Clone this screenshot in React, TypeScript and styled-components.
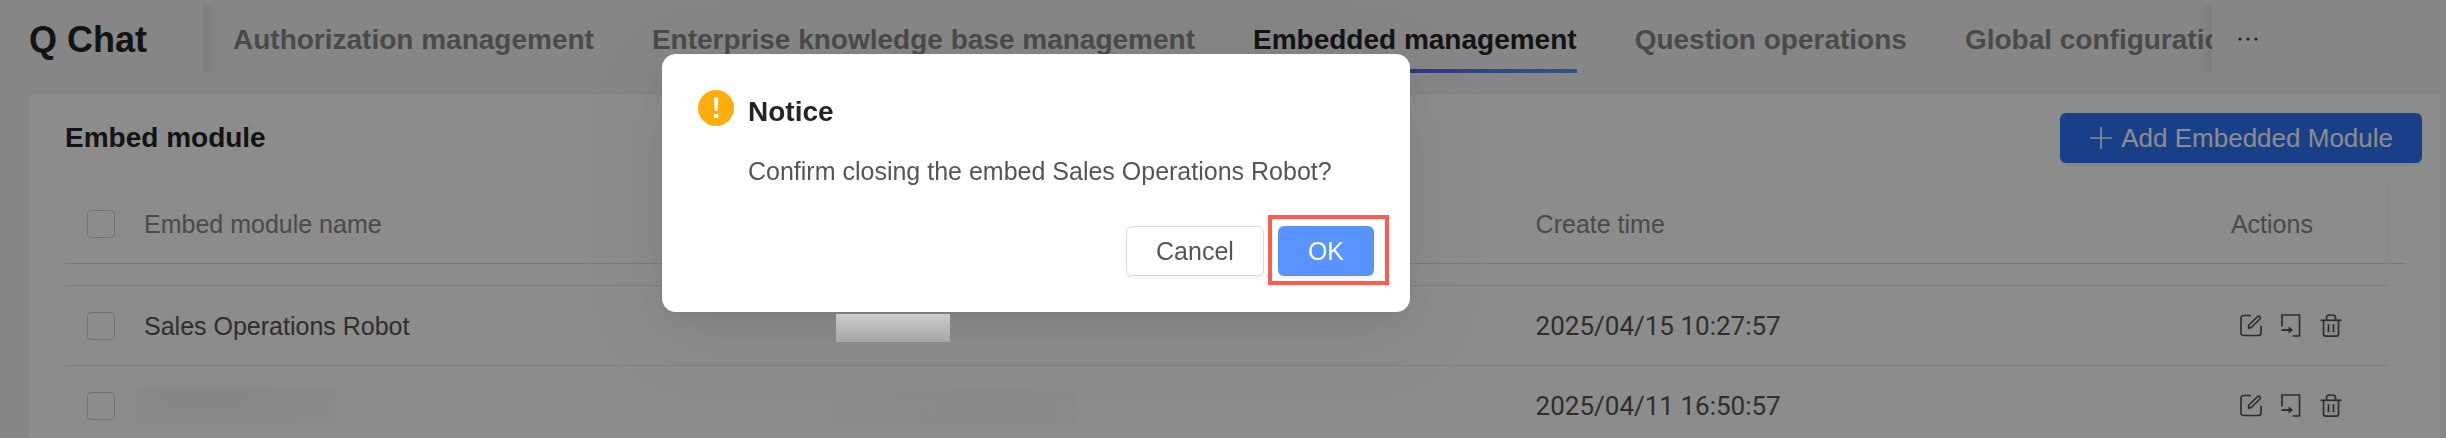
import React from "react";
import styled, { createGlobalStyle, css } from "styled-components";

const GlobalStyle = createGlobalStyle`
  *, *::before, *::after { box-sizing: border-box; }
  body {
    margin: 0;
    background: #f4f4f4;
    color: #555;
    font-family: "Liberation Sans", Arial, Helvetica, sans-serif;
    font-size: 25px;
    line-height: 40px;
  }
  h1, h2, p { margin: 0; }
  button { font: inherit; cursor: pointer; }
`;

const Page = styled.div`
  display: flex;
  flex-direction: column;
  height: 100vh;
  overflow: hidden;
`;

const Header = styled.header`
  display: flex;
  align-items: center;
  flex: none;
  padding: 5px 234px 22px 29px;
`;

const Brand = styled.h1`
  flex: none;
  width: 174px;
  height: 68px;
  color: #242424;
  font-size: 36px;
  font-weight: 700;
  line-height: 70px;
`;

const TabScroller = styled.nav`
  position: relative;
  display: flex;
  flex: 1;
  gap: 58px;
  min-width: 0;
  padding-left: 30px;
  overflow: hidden;

  &::before,
  &::after {
    content: "";
    position: absolute;
    top: 0;
    bottom: 0;
    width: 14px;
  }
  &::before {
    left: 0;
    background: linear-gradient(90deg, rgba(0, 0, 0, 0.06), rgba(0, 0, 0, 0));
  }
  &::after {
    right: 0;
    background: linear-gradient(270deg, rgba(0, 0, 0, 0.06), rgba(0, 0, 0, 0));
  }
`;

const Tab = styled.a<{ $active?: boolean }>`
  flex: none;
  height: 68px;
  color: ${(p) => (p.$active ? "#242424" : "#888")};
  font-size: 28px;
  font-weight: 700;
  line-height: 70px;
  text-decoration: none;
  white-space: nowrap;
  border-bottom: 4px solid transparent;
  border-image: ${(p) =>
    p.$active ? "linear-gradient(90deg, #5f5fff, #5560e8 45%, #57a0f0) 1" : "none"};
`;

const MoreButton = styled.button`
  display: flex;
  flex: none;
  margin-left: 24px;
  margin-right: -48px;
  padding: 0;
  border: 0;
  background: none;
  color: #444;
`;

const Card = styled.main`
  flex: none;
  margin: 0 6px 0 29px;
  padding: 18px 18px 0 36px;
  background: #fff;
`;

const CardHead = styled.div`
  display: flex;
  align-items: center;
  justify-content: space-between;
  margin-bottom: 22px;
`;

const CardTitle = styled.h2`
  color: #242424;
  font-size: 28px;
  font-weight: 700;
`;

const Button = styled.button<{ $kind: "primary" | "light" | "plain" }>`
  display: flex;
  align-items: center;
  gap: 8px;
  height: 50px;
  padding: 0 ${(p) => (p.$kind === "primary" ? 28 : 29)}px;
  border: 1px solid ${(p) => (p.$kind === "plain" ? "#d9d9d9" : "transparent")};
  border-radius: 6px;
  background: ${(p) =>
    ({ primary: "#2f73fa", light: "#5893ff", plain: "#fff" })[p.$kind]};
  color: ${(p) => (p.$kind === "plain" ? "#555" : "#fff")};
  box-shadow: 0 3px 1px rgba(0, 0, 0, 0.04);
  font-size: ${(p) => (p.$kind === "primary" ? 26 : 25)}px;
  line-height: 40px;
  white-space: nowrap;
`;

const Table = styled.table`
  width: calc(100% - 33px);
  border-collapse: separate;
  border-spacing: 0;
  table-layout: fixed;
`;

const HeadCell = styled.th<{ $last?: boolean }>`
  height: 79px;
  padding: 0;
  border-bottom: 1px solid #e0e0e0;
  color: #888;
  font-weight: 400;
  text-align: left;
  ${(p) =>
    p.$last &&
    css`
      position: relative;
      border-right: 1px solid #f8f8f8;
      &::after {
        content: "";
        position: absolute;
        right: -16px;
        bottom: -1px;
        width: 15px;
        height: 1px;
        background: #e0e0e0;
      }
    `}
`;

const SpacerCell = styled.td`
  height: 22px;
  padding: 0;
  border-bottom: 1px solid #ebebeb;
`;

const Cell = styled.td`
  height: 80px;
  padding: 0;
  border-bottom: 1px solid #ebebeb;
`;

const CheckLabel = styled.label`
  display: flex;
  padding-left: 22px;
`;

const Checkbox = styled.input`
  appearance: none;
  width: 28px;
  height: 28px;
  margin: 0;
  border: 1px solid #d2d2d2;
  border-radius: 4px;
  background: #fff;
`;

const Time = styled.time`
  font-family: Roboto, "Liberation Sans", sans-serif;
  font-size: 26px;
`;

const Redacted = styled.div<{ $tone: "name" | "owner" }>`
  height: 37px;
  width: ${(p) => (p.$tone === "name" ? 200 : 242)}px;
  margin-left: ${(p) => (p.$tone === "name" ? -8 : -2)}px;
  background: ${(p) =>
    p.$tone === "name"
      ? "radial-gradient(ellipse at 35% 30%, #f4f4f4, #fdfdfd)"
      : "radial-gradient(ellipse at 65% 100%, #f8f8f8, #ffffff)"};
`;

/* Stays above the mask, so it reads brighter than the row around it. */
const Cover = styled.div`
  position: relative;
  z-index: 20;
  width: 114px;
  height: 28px;
  margin-top: 4px;
  background: linear-gradient(#cbcbcb, #a6a6a6);
`;

const RowActions = styled.div`
  display: flex;
  gap: 16px;
  padding-left: 8px;
`;

const IconButton = styled.button`
  display: flex;
  padding: 0;
  border: 0;
  background: none;
  color: #555;
`;

const Mask = styled.div`
  position: fixed;
  inset: 0;
  z-index: 10;
  padding: 54px 0 0 662px;
  background: rgba(0, 0, 0, 0.45);
`;

const Dialog = styled.section`
  width: 748px;
  max-width: 100%;
  padding: 36px;
  border-radius: 14px;
  background: #fff;
  box-shadow: 0 6px 12px -8px rgba(0, 0, 0, 0.12),
    0 12px 32px rgba(0, 0, 0, 0.06), 0 18px 96px 24px rgba(0, 0, 0, 0.05);
`;

const DialogHead = styled.div`
  display: flex;
  align-items: flex-start;
  gap: 14px;
  height: 61px;
`;

const DialogTitle = styled.h2`
  color: #242424;
  font-size: 28px;
  font-weight: 700;
  line-height: 44px;
`;

const DialogText = styled.p`
  padding-left: 50px;
`;

const DialogFoot = styled.div`
  display: flex;
  justify-content: flex-end;
  gap: 14px;
  margin-top: 35px;
`;

const Highlighted = styled.div`
  position: relative;

  &::after {
    content: "";
    position: absolute;
    inset: -11px -15px -9px -10px;
    border: 4px solid #ff5b4c;
    pointer-events: none;
  }
`;

const EditIcon = () => (
  <svg width="24" height="24" viewBox="0 0 24 24" fill="none" stroke="currentColor" strokeWidth="1.7">
    <path d="M12 1.500H4.500A2.500 2.500 0 0 0 2 4v15a2.500 2.500 0 0 0 2.500 2.500h15A2.500 2.500 0 0 0 22 19v-7.500" />
    <path d="M9.500 14.300l.4-3.300 8.600-8.400a1.500 1.500 0 0 1 2.200 0l.2.200a1.500 1.500 0 0 1 0 2.200l-8.600 8.500z" strokeLinejoin="round" />
  </svg>
);

const EmbedIcon = () => (
  <svg width="24" height="24" viewBox="0 0 24 24" fill="none" stroke="currentColor" strokeWidth="1.7">
    <path d="M3 12.500V1h17.500v21H13.500" />
    <path d="M2.500 16h8" strokeWidth="2" />
    <path d="M9.500 12.500l4.500 3.500-4.500 3.500z" fill="currentColor" stroke="none" />
  </svg>
);

const TrashIcon = () => (
  <svg width="24" height="24" viewBox="0 0 24 24" fill="none" stroke="currentColor" strokeWidth="1.7">
    <path d="M1.500 6.300h21" />
    <path d="M7.500 6.300V3.700A2.700 2.700 0 0 1 10.200 1h3.600a2.700 2.700 0 0 1 2.700 2.700v2.600" />
    <path d="M4.500 6.300V20a2.200 2.200 0 0 0 2.200 2.200h10.600a2.200 2.200 0 0 0 2.200-2.200V6.300" />
    <path d="M9.500 10.300v8M14.500 10.300v8" />
  </svg>
);

const PlusIcon = () => (
  <svg width="24" height="24" viewBox="0 0 24 24" stroke="currentColor" strokeWidth="1.600">
    <path d="M12 1v22M1 12h22" />
  </svg>
);

const MoreIcon = () => (
  <svg width="24" height="8" viewBox="0 0 24 8" fill="currentColor">
    <circle cx="4" cy="4" r="1.600" />
    <circle cx="12" cy="4" r="1.600" />
    <circle cx="20" cy="4" r="1.600" />
  </svg>
);

const WarningIcon = () => (
  <svg width="36" height="36" viewBox="0 0 36 36">
    <circle cx="18" cy="18" r="18" fill="#ffac0c" />
    <path d="M16 7.500h4.400l-.8 13.500h-2.800z" fill="#fff" />
    <rect x="16" y="24" width="4.400" height="4" fill="#fff" />
  </svg>
);

const tabs = [
  "Authorization management",
  "Enterprise knowledge base management",
  "Embedded management",
  "Question operations",
  "Global configuration",
];

const rows = [
  { name: "Sales Operations Robot", time: "2025/04/15 10:27:57" },
  { name: null, time: "2025/04/11 16:50:57" },
];

export default function App() {
  return (
    <>
      <GlobalStyle />
      <Page>
        <Header>
          <Brand>Q Chat</Brand>
          <TabScroller>
            {tabs.map((tab) => (
              <Tab key={tab} href="#" $active={tab === "Embedded management"}>
                {tab}
              </Tab>
            ))}
          </TabScroller>
          <MoreButton aria-label="More tabs">
            <MoreIcon />
          </MoreButton>
        </Header>

        <Card>
          <CardHead>
            <CardTitle>Embed module</CardTitle>
            <Button $kind="primary">
              <PlusIcon />
              Add Embedded Module
            </Button>
          </CardHead>
          <Table>
            <colgroup>
              <col style={{ width: "3.4%" }} />
              <col style={{ width: "29.78%" }} />
              <col style={{ width: "30.1%" }} />
              <col style={{ width: "29.92%" }} />
              <col />
            </colgroup>
            <thead>
              <tr>
                <HeadCell>
                  <CheckLabel>
                    <Checkbox type="checkbox" aria-label="Select all" />
                  </CheckLabel>
                </HeadCell>
                <HeadCell>Embed module name</HeadCell>
                <HeadCell />
                <HeadCell>Create time</HeadCell>
                <HeadCell $last>Actions</HeadCell>
              </tr>
            </thead>
            <tbody>
              <tr>
                <SpacerCell colSpan={5} />
              </tr>
              {rows.map((row) => (
                <tr key={row.time}>
                  <Cell>
                    <CheckLabel>
                      <Checkbox type="checkbox" aria-label="Select row" />
                    </CheckLabel>
                  </Cell>
                  <Cell>{row.name ?? <Redacted $tone="name" />}</Cell>
                  <Cell>{row.name ? <Cover /> : <Redacted $tone="owner" />}</Cell>
                  <Cell>
                    <Time>{row.time}</Time>
                  </Cell>
                  <Cell>
                    <RowActions>
                      <IconButton aria-label="Edit"><EditIcon /></IconButton>
                      <IconButton aria-label="Embed"><EmbedIcon /></IconButton>
                      <IconButton aria-label="Delete"><TrashIcon /></IconButton>
                    </RowActions>
                  </Cell>
                </tr>
              ))}
            </tbody>
          </Table>
        </Card>
      </Page>

      <Mask>
        <Dialog role="dialog" aria-modal="true" aria-labelledby="notice-title">
          <DialogHead>
            <WarningIcon />
            <DialogTitle id="notice-title">Notice</DialogTitle>
          </DialogHead>
          <DialogText>Confirm closing the embed Sales Operations Robot?</DialogText>
          <DialogFoot>
            <Button $kind="plain">Cancel</Button>
            <Highlighted>
              <Button $kind="light">OK</Button>
            </Highlighted>
          </DialogFoot>
        </Dialog>
      </Mask>
    </>
  );
}
